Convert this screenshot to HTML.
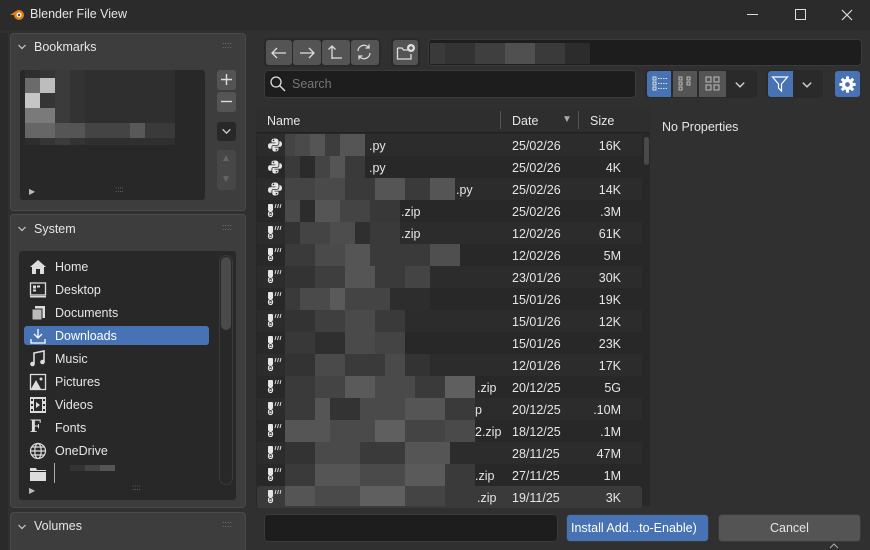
<!DOCTYPE html>
<html><head><meta charset="utf-8">
<style>
*{box-sizing:border-box;margin:0;padding:0}
html,body{width:870px;height:550px;overflow:hidden}
body{background:#303030;font-family:"Liberation Sans",sans-serif;color:#e6e6e6;font-size:12.5px;position:relative}
.a{position:absolute}
.title{left:0;top:0;width:870px;height:30px;background:#2b2b2b}
.panel{background:#3d3d3d;border:1px solid #4a4a4a;border-radius:4px}
.box{background:#282828;border-radius:3px}
.btn{background:#545454;border-radius:3px}
.t{position:absolute;white-space:nowrap}
.row{position:absolute;left:257px;width:385px;height:22px}
.row .d{position:absolute;left:255px;top:5px}
.row .s{position:absolute;right:21px;top:5px}
.row .n{position:absolute;top:5px}
.mo{position:absolute;left:28px;top:0;height:22px}
.ic{position:absolute;left:10px;top:3px}
.chev{position:absolute}
</style></head><body>
<svg width="0" height="0" style="position:absolute"><defs>
<symbol id="py" viewBox="0 0 16 16"><path d="M8 1.5 C4.5 1.5 4.5 3 4.5 4 V5.5 H8.5 V6.3 H3 C1.5 6.3 1 7.8 1 9 C1 10.5 1.7 11.8 3 11.8 H4.5 V10 C4.5 8.8 5.5 8 6.5 8 H10 C11 8 11.5 7.3 11.5 6.5 V4 C11.5 2.5 10 1.5 8 1.5Z" fill="#e6e6e6"/><path d="M8 14.5 C11.5 14.5 11.5 13 11.5 12 V10.5 H7.5 V9.7 H13 C14.5 9.7 15 8.2 15 7 C15 5.5 14.3 4.2 13 4.2 H12.3 V6.5 C12.3 7.8 11.3 8.8 10 8.8 H6.5 C5.8 8.8 5.3 9.3 5.3 10 V12 C5.3 13.5 6 14.5 8 14.5Z" fill="#e6e6e6"/><circle cx="6.5" cy="3.3" r=".8" fill="#282828"/><circle cx="9.5" cy="12.7" r=".8" fill="#282828"/></symbol>
<symbol id="zip" viewBox="0 0 16 16"><rect x="1" y="1" width="5" height="7" rx="1" fill="#e6e6e6"/><rect x="1.5" y="8.5" width="4" height="5" rx="2" fill="none" stroke="#e6e6e6" stroke-width="1.2"/><rect x="2.5" y="10.5" width="2" height="1.5" fill="#e6e6e6"/><path d="M8 5 L9 1 M10.5 5 L11.5 1 M13 5 L14 1" stroke="#e6e6e6" stroke-width="0.9"/></symbol>
<symbol id="cv" viewBox="0 0 10 10"><path d="M1.5 3 L5 6.5 L8.5 3" fill="none" stroke="#ccc" stroke-width="1.2"/></symbol>
</defs></svg>
<div class="a title"></div>
<svg class="a" style="left:9px;top:6px" width="16" height="16" viewBox="0 0 16 16"><circle cx="10" cy="9" r="5" fill="#e87d0d"/><circle cx="10" cy="9" r="2.5" fill="#fff"/><circle cx="10" cy="9" r="1.3" fill="#265787"/><path d="M1 9 L7 5 L5 9Z" fill="#e87d0d"/></svg>
<div class="t" style="left:30px;top:7px;font-size:12.5px">Blender File View</div>
<div class="a" style="left:747px;top:14px;width:11px;height:1px;background:#ddd"></div>
<div class="a" style="left:795px;top:9px;width:11px;height:11px;border:1.3px solid #ddd"></div>
<svg class="a" style="left:841px;top:9px" width="12" height="12" viewBox="0 0 12 12"><path d="M1 1 L11 11 M11 1 L1 11" stroke="#ddd" stroke-width="1.2"/></svg>

<div class="a" style="left:0;top:33px;width:8px;height:517px;background:#2a2a2a"></div>

<!-- Bookmarks -->
<div class="a panel" style="left:10px;top:33px;width:236px;height:178px"></div>
<svg class="a" style="left:17px;top:42px" width="10" height="10"><use href="#cv"/></svg>
<div class="t" style="left:34px;top:40px">Bookmarks</div>
<div class="t" style="left:222px;top:40px;color:#777;font-size:9px">::::</div>
<div class="a box" style="left:20px;top:70px;width:185px;height:130px"></div>
<div class="a" style="left:25px;top:70px;width:150px;height:75px;background:linear-gradient(90deg,#2e2e2e 0 15px,#353535 15px 30px,#3b3b3b 30px 45px,#333 45px 60px,#2f2f2f 60px 100%)"></div>
<div class="a" style="left:25px;top:78px;width:15px;height:15px;background:#6b6b6b"></div>
<div class="a" style="left:40px;top:78px;width:15px;height:15px;background:#bdbdbd"></div>
<div class="a" style="left:25px;top:93px;width:15px;height:15px;background:#c6c6c6"></div>
<div class="a" style="left:25px;top:108px;width:30px;height:15px;background:#7a7a7a"></div>
<div class="a" style="left:25px;top:123px;width:150px;height:15px;background:linear-gradient(90deg,#666 0 30px,#555 30px 60px,#444 60px 105px,#585858 105px 120px,#3a3a3a 120px)"></div>
<div class="t" style="left:29px;top:187px;color:#bbb;font-size:8px">▶</div>
<div class="t" style="left:115px;top:185px;color:#777;font-size:8px">::::</div>
<div class="a btn" style="left:217px;top:70px;width:19px;height:20px"></div>
<svg class="a" style="left:220px;top:73px" width="13" height="13"><path d="M6.5 1 V12 M1 6.5 H12" stroke="#ddd" stroke-width="1.4"/></svg>
<div class="a btn" style="left:217px;top:92px;width:19px;height:20px"></div>
<svg class="a" style="left:220px;top:95px" width="13" height="13"><path d="M1 6.5 H12" stroke="#ddd" stroke-width="1.4"/></svg>
<div class="a" style="left:217px;top:122px;width:19px;height:19px;background:#282828;border-radius:3px"></div>
<svg class="a" style="left:221px;top:126px" width="11" height="11"><use href="#cv"/></svg>
<div class="a" style="left:217px;top:150px;width:19px;height:40px;background:#474747;border-radius:3px"></div>
<div class="t" style="left:221px;top:153px;color:#666;font-size:10px">▲</div><div class="t" style="left:221px;top:174px;color:#666;font-size:10px">▼</div>

<!-- System -->
<div class="a panel" style="left:10px;top:214px;width:236px;height:294px"></div>
<svg class="a" style="left:17px;top:224px" width="10" height="10"><use href="#cv"/></svg>
<div class="t" style="left:34px;top:222px">System</div>
<div class="t" style="left:222px;top:222px;color:#777;font-size:9px">::::</div>
<div class="a box" style="left:19px;top:251px;width:217px;height:249px"></div>
<div class="a" style="left:219px;top:255px;width:14px;height:230px;border:1px solid #3a3a3a;border-radius:7px"></div>
<div class="a" style="left:221px;top:257px;width:10px;height:73px;background:#4a4a4a;border-radius:5px"></div>
<div class="a" style="left:24px;top:326px;width:185px;height:19px;background:#4772b3;border-radius:3px"></div>
<svg class="a" style="left:29px;top:258px" width="18" height="18" viewBox="0 0 18 18"><path d="M9 2 L17 9 L15 9 L15 16 L11 16 L11 11 L7 11 L7 16 L3 16 L3 9 L1 9Z" fill="#ddd"/></svg>
<svg class="a" style="left:29px;top:281px" width="18" height="18" viewBox="0 0 18 18"><rect x="1.5" y="2" width="15" height="12" fill="none" stroke="#ddd" stroke-width="1.3"/><rect x="4" y="4.5" width="3" height="3" fill="#ddd"/><rect x="8" y="4.5" width="3" height="2" fill="#ddd"/><rect x="4" y="8.5" width="3" height="2" fill="#ddd"/><rect x="1" y="15" width="16" height="1.5" fill="#ddd"/></svg>
<svg class="a" style="left:29px;top:304px" width="18" height="18" viewBox="0 0 18 18"><rect x="6" y="2" width="10" height="12" fill="#ddd"/><rect x="3" y="5" width="10" height="11" fill="#bbb" stroke="#282828"/></svg>
<svg class="a" style="left:29px;top:327px" width="18" height="18" viewBox="0 0 18 18"><path d="M9 2 V11 M5 7 L9 11 L13 7 M2 12 V16 H16 V12" fill="none" stroke="#fff" stroke-width="1.3"/></svg>
<svg class="a" style="left:29px;top:350px" width="18" height="18" viewBox="0 0 18 18"><path d="M5 14 V3 L15 1 V12" fill="none" stroke="#ddd" stroke-width="1.6"/><circle cx="3.5" cy="14" r="2.3" fill="#ddd"/><circle cx="13.5" cy="12" r="2.3" fill="#ddd"/></svg>
<svg class="a" style="left:29px;top:373px" width="18" height="18" viewBox="0 0 18 18"><rect x="1.5" y="1.5" width="15" height="15" fill="none" stroke="#ddd" stroke-width="1.3"/><path d="M2 16 L7 7 L12 16Z" fill="#ddd"/><circle cx="12" cy="6" r="1.5" fill="#ddd"/></svg>
<svg class="a" style="left:29px;top:396px" width="18" height="18" viewBox="0 0 18 18"><rect x="1" y="1" width="16" height="16" fill="#ddd"/><rect x="5" y="3" width="8" height="12" fill="#282828"/><path d="M7 6 L11 9 L7 12Z" fill="#ddd"/><rect x="2" y="3" width="2" height="2" fill="#282828"/><rect x="2" y="8" width="2" height="2" fill="#282828"/><rect x="2" y="13" width="2" height="2" fill="#282828"/><rect x="14" y="3" width="2" height="2" fill="#282828"/><rect x="14" y="8" width="2" height="2" fill="#282828"/><rect x="14" y="13" width="2" height="2" fill="#282828"/></svg>
<div class="t" style="left:30px;top:416px;font-family:'Liberation Serif',serif;font-weight:bold;font-size:19px;color:#ddd">F</div>
<svg class="a" style="left:29px;top:442px" width="18" height="18" viewBox="0 0 18 18"><g fill="none" stroke="#ddd" stroke-width="1.2"><circle cx="9" cy="9" r="7.5"/><ellipse cx="9" cy="9" rx="3.2" ry="7.5"/><path d="M1.5 9H16.5M3 5H15M3 13H15"/></g></svg>
<svg class="a" style="left:29px;top:465px" width="18" height="18" viewBox="0 0 18 18"><path d="M1 3 H7 L8 5 H17 V16 H1Z" fill="#ddd"/><rect x="1" y="6" width="16" height="1" fill="#282828"/></svg>
<div class="t" style="left:55px;top:260px">Home</div>
<div class="t" style="left:55px;top:283px">Desktop</div>
<div class="t" style="left:55px;top:306px">Documents</div>
<div class="t" style="left:55px;top:329px;color:#fff">Downloads</div>
<div class="t" style="left:55px;top:352px">Music</div>
<div class="t" style="left:55px;top:375px">Pictures</div>
<div class="t" style="left:55px;top:398px">Videos</div>
<div class="t" style="left:55px;top:421px">Fonts</div>
<div class="t" style="left:55px;top:444px">OneDrive</div>
<div class="a" style="left:54px;top:463px;width:1px;height:20px;background:#aaa"></div>
<div class="a" style="left:70px;top:465px;width:45px;height:6px;background:linear-gradient(90deg,#333 0 15px,#444 15px 30px,#555 30px)"></div>
<div class="t" style="left:29px;top:486px;color:#bbb;font-size:8px">▶</div>
<div class="t" style="left:132px;top:483px;color:#777;font-size:8px">::::</div>

<!-- Volumes -->
<div class="a panel" style="left:10px;top:512px;width:236px;height:50px"></div>
<svg class="a" style="left:17px;top:522px" width="10" height="10"><use href="#cv"/></svg>
<div class="t" style="left:34px;top:519px">Volumes</div>
<div class="t" style="left:222px;top:519px;color:#777;font-size:9px">::::</div>

<!-- toolbar -->
<div class="a" style="left:264px;top:38px;width:117px;height:29px;background:#2a2a2a;border-radius:4px"></div>
<div class="a btn" style="left:266px;top:40px;width:26px;height:25px"></div>
<div class="a btn" style="left:293px;top:40px;width:28px;height:25px"></div>
<div class="a btn" style="left:322px;top:40px;width:28px;height:25px"></div>
<div class="a btn" style="left:351px;top:40px;width:28px;height:25px"></div>
<svg class="a" style="left:270px;top:44px" width="18" height="18" viewBox="0 0 18 18"><path d="M16 9 H2 M7 4 L2 9 L7 14" fill="none" stroke="#ddd" stroke-width="1.3"/></svg>
<svg class="a" style="left:298px;top:44px" width="18" height="18" viewBox="0 0 18 18"><path d="M2 9 H16 M11 4 L16 9 L11 14" fill="none" stroke="#ddd" stroke-width="1.3"/></svg>
<svg class="a" style="left:327px;top:43px" width="18" height="18" viewBox="0 0 18 18"><path d="M5 16 V3 M1.5 6.5 L5 3 L8.5 6.5 M5 15 H15" fill="none" stroke="#ddd" stroke-width="1.3"/></svg>
<svg class="a" style="left:355px;top:43px" width="18" height="18" viewBox="0 0 18 18"><path d="M3 8 A6 6 0 0 1 14 5 M15 10 A6 6 0 0 1 4 13 M14 1.5 V5 H10.5 M4 16.5 V13 H7.5" fill="none" stroke="#ddd" stroke-width="1.3"/></svg>
<div class="a" style="left:391px;top:38px;width:29px;height:29px;background:#2a2a2a;border-radius:4px"></div>
<div class="a btn" style="left:393px;top:40px;width:25px;height:25px"></div>
<svg class="a" style="left:396px;top:43px" width="20" height="18" viewBox="0 0 20 18"><path d="M1.5 5 H6 L7.5 7 H12 M1.5 5 V16 H15 V11" fill="none" stroke="#ddd" stroke-width="1.3"/><circle cx="15" cy="5" r="4" fill="#ddd"/><path d="M15 3 V7 M13 5 H17" stroke="#545454" stroke-width="1.3"/></svg>
<div class="a" style="left:428px;top:39px;width:434px;height:27px;background:#1d1d1d;border-radius:4px;border:1px solid #3a3a3a"></div>
<div class="a" style="left:430px;top:43px;width:160px;height:21px;background:linear-gradient(90deg,#3a3a3a 0 15px,#333 15px 45px,#3f3f3f 45px 75px,#505050 75px 105px,#3a3a3a 105px 135px,#2c2c2c 135px)"></div>

<div class="a" style="left:264px;top:70px;width:372px;height:28px;background:#1d1d1d;border-radius:4px;border:1px solid #3a3a3a"></div>
<svg class="a" style="left:269px;top:75px" width="18" height="18" viewBox="0 0 18 18"><circle cx="7" cy="7" r="5" fill="none" stroke="#ddd" stroke-width="1.3"/><path d="M10.5 10.5 L16 16" stroke="#ddd" stroke-width="1.4"/></svg>
<div class="t" style="left:292px;top:77px;color:#777">Search</div>

<div class="a" style="left:645px;top:70px;width:112px;height:28px;background:#2a2a2a;border-radius:4px"></div>
<div class="a" style="left:647px;top:71px;width:24px;height:26px;background:#4772b3;border-radius:3px 0 0 3px"></div>
<div class="a" style="left:673px;top:71px;width:24px;height:26px;background:#545454"></div>
<div class="a" style="left:699px;top:71px;width:27px;height:26px;background:#545454"></div>
<svg class="a" style="left:651px;top:75px" width="18" height="18" viewBox="0 0 18 18"><g fill="none" stroke="#ddd"><rect x="2" y="2" width="3" height="3"/><rect x="2" y="7" width="3" height="3"/><rect x="2" y="12" width="3" height="3"/></g><path d="M7 3.5H16M7 8.5H16M7 13.5H16" stroke="#ddd" stroke-dasharray="1.5 1"/></svg>
<svg class="a" style="left:677px;top:75px" width="18" height="18" viewBox="0 0 18 18"><g fill="none" stroke="#bbb"><rect x="2" y="2" width="3" height="3"/><rect x="2" y="7" width="3" height="3"/><rect x="2" y="12" width="3" height="3"/><rect x="10" y="2" width="3" height="3"/><rect x="10" y="7" width="3" height="3"/></g></svg>
<svg class="a" style="left:704px;top:75px" width="18" height="18" viewBox="0 0 18 18"><g fill="none" stroke="#bbb"><rect x="2" y="2" width="5" height="5"/><rect x="10" y="2" width="5" height="5"/><rect x="2" y="10" width="5" height="5"/><rect x="10" y="10" width="5" height="5"/></g></svg>
<svg class="a" style="left:734px;top:79px" width="12" height="12"><use href="#cv"/></svg>

<div class="a" style="left:766px;top:70px;width:57px;height:28px;background:#2a2a2a;border-radius:4px"></div>
<div class="a" style="left:768px;top:71px;width:25px;height:26px;background:#4772b3;border-radius:3px 0 0 3px"></div>
<svg class="a" style="left:771px;top:75px" width="18" height="18" viewBox="0 0 18 18"><path d="M1.5 2 H16.5 L10.5 9 V16 L7.5 13 V9Z" fill="none" stroke="#fff" stroke-width="1.2"/></svg>
<svg class="a" style="left:801px;top:79px" width="12" height="12"><use href="#cv"/></svg>
<div class="a" style="left:835px;top:71px;width:25px;height:26px;background:#4772b3;border-radius:3px"></div>
<svg class="a" style="left:838px;top:75px" width="19" height="19" viewBox="0 0 20 20"><g fill="#fff"><circle cx="10" cy="10" r="6"/><g stroke="#fff" stroke-width="3.2"><path d="M10 1.5 V18.5 M1.5 10 H18.5 M4 4 L16 16 M16 4 L4 16"/></g></g><circle cx="10" cy="10" r="2.5" fill="#4772b3"/></svg>

<!-- file list -->
<div class="a" style="left:256px;top:108px;width:394px;height:398px;background:#282828"></div>
<div class="a" style="left:256px;top:108px;width:394px;height:25px;background:#2e2e2e;border-bottom:1px solid #222"></div>
<div class="t" style="left:267px;top:114px">Name</div>
<div class="a" style="left:500px;top:111px;width:1px;height:18px;background:#555"></div>
<div class="t" style="left:512px;top:114px">Date</div>
<div class="t" style="left:562px;top:114px;font-size:10px;color:#aaa">▼</div>
<div class="a" style="left:578px;top:111px;width:1px;height:18px;background:#555"></div>
<div class="t" style="left:590px;top:114px">Size</div>
<div class="a" style="left:644px;top:137px;width:5px;height:28px;background:#4a4a4a;border-radius:3px"></div>

<div class="row" style="top:134px;background:#2c2c2c"><svg class="ic" width="16" height="16"><use href="#py"/></svg><div class="mo" style="width:80px;background:linear-gradient(90deg,#444 0 10px,#4a4a4a 10px 25px,#555 25px 40px,#3d3d3d 40px 55px,#555 55px)"></div><span class="n" style="left:112px">.py</span><span class="d">25/02/26</span><span class="s">16K</span></div>
<div class="row" style="top:156px"><svg class="ic" width="16" height="16"><use href="#py"/></svg><div class="mo" style="width:80px;background:linear-gradient(90deg,#3a3a3a 0 15px,#2b2b2b 15px 30px,#444 30px 45px,#555 45px 60px,#3a3a3a 60px)"></div><span class="n" style="left:112px">.py</span><span class="d">25/02/26</span><span class="s">4K</span></div>
<div class="row" style="top:178px;background:#2c2c2c"><svg class="ic" width="16" height="16"><use href="#py"/></svg><div class="mo" style="width:170px;background:linear-gradient(90deg,#444 0 30px,#4a4a4a 30px 60px,#3a3a3a 60px 90px,#555 90px 120px,#3a3a3a 120px 145px,#555 145px)"></div><span class="n" style="left:199px">.py</span><span class="d">25/02/26</span><span class="s">14K</span></div>
<div class="row" style="top:200px"><svg class="ic" width="16" height="16"><use href="#zip"/></svg><div class="mo" style="width:115px;background:linear-gradient(90deg,#4a4a4a 0 15px,#2c2c2c 15px 30px,#555 30px 55px,#444 55px 85px,#383838 85px)"></div><span class="n" style="left:144px">.zip</span><span class="d">25/02/26</span><span class="s">.3M</span></div>
<div class="row" style="top:222px;background:#2c2c2c"><svg class="ic" width="16" height="16"><use href="#zip"/></svg><div class="mo" style="width:115px;background:linear-gradient(90deg,#333 0 15px,#444 15px 45px,#4d4d4d 45px 70px,#2f2f2f 70px 85px,#3a3a3a 85px)"></div><span class="n" style="left:144px">.zip</span><span class="d">12/02/26</span><span class="s">61K</span></div>
<div class="row" style="top:244px"><svg class="ic" width="16" height="16"><use href="#zip"/></svg><div class="mo" style="width:175px;background:linear-gradient(90deg,#3a3a3a 0 30px,#4a4a4a 30px 60px,#555 60px 85px,#3a3a3a 85px 145px,#4f4f4f 145px)"></div><span class="d">12/02/26</span><span class="s">5M</span></div>
<div class="row" style="top:266px;background:#2c2c2c"><svg class="ic" width="16" height="16"><use href="#zip"/></svg><div class="mo" style="width:145px;background:linear-gradient(90deg,#333 0 30px,#3e3e3e 30px 60px,#555 60px 90px,#3a3a3a 90px 120px,#444 120px)"></div><span class="d">23/01/26</span><span class="s">30K</span></div>
<div class="row" style="top:288px"><svg class="ic" width="16" height="16"><use href="#zip"/></svg><div class="mo" style="width:145px;background:linear-gradient(90deg,#3a3a3a 0 15px,#4a4a4a 15px 45px,#5a5a5a 45px 60px,#444 60px 105px,#2d2d2d 105px)"></div><span class="d">15/01/26</span><span class="s">19K</span></div>
<div class="row" style="top:310px;background:#2c2c2c"><svg class="ic" width="16" height="16"><use href="#zip"/></svg><div class="mo" style="width:120px;background:linear-gradient(90deg,#333 0 30px,#3f3f3f 30px 60px,#4a4a4a 60px 90px,#3a3a3a 90px)"></div><span class="d">15/01/26</span><span class="s">12K</span></div>
<div class="row" style="top:332px"><svg class="ic" width="16" height="16"><use href="#zip"/></svg><div class="mo" style="width:120px;background:linear-gradient(90deg,#383838 0 30px,#2f2f2f 30px 60px,#4a4a4a 60px 90px,#444 90px)"></div><span class="d">15/01/26</span><span class="s">23K</span></div>
<div class="row" style="top:354px;background:#2c2c2c"><svg class="ic" width="16" height="16"><use href="#zip"/></svg><div class="mo" style="width:145px;background:linear-gradient(90deg,#333 0 30px,#4a4a4a 30px 60px,#3a3a3a 60px 100px,#4a4a4a 100px 120px,#333 120px)"></div><span class="d">12/01/26</span><span class="s">17K</span></div>
<div class="row" style="top:376px"><svg class="ic" width="16" height="16"><use href="#zip"/></svg><div class="mo" style="width:190px;background:linear-gradient(90deg,#3a3a3a 0 30px,#444 30px 60px,#5a5a5a 60px 90px,#4a4a4a 90px 130px,#3a3a3a 130px 160px,#5f5f5f 160px)"></div><span class="n" style="left:220px">.zip</span><span class="d">20/12/25</span><span class="s">5G</span></div>
<div class="row" style="top:398px;background:#2c2c2c"><svg class="ic" width="16" height="16"><use href="#zip"/></svg><div class="mo" style="width:190px;background:linear-gradient(90deg,#3a3a3a 0 30px,#555 30px 45px,#333 45px 75px,#4a4a4a 75px 120px,#555 120px 160px,#3a3a3a 160px)"></div><span class="n" style="left:218px">p</span><span class="d">20/12/25</span><span class="s">.10M</span></div>
<div class="row" style="top:420px"><svg class="ic" width="16" height="16"><use href="#zip"/></svg><div class="mo" style="width:190px;background:linear-gradient(90deg,#555 0 45px,#4a4a4a 45px 90px,#5f5f5f 90px 120px,#444 120px 160px,#4a4a4a 160px)"></div><span class="n" style="left:218px">2.zip</span><span class="d">18/12/25</span><span class="s">.1M</span></div>
<div class="row" style="top:442px;background:#2c2c2c"><svg class="ic" width="16" height="16"><use href="#zip"/></svg><div class="mo" style="width:165px;background:linear-gradient(90deg,#333 0 30px,#4a4a4a 30px 75px,#3a3a3a 75px 120px,#555 120px)"></div><span class="d">28/11/25</span><span class="s">47M</span></div>
<div class="row" style="top:464px"><svg class="ic" width="16" height="16"><use href="#zip"/></svg><div class="mo" style="width:190px;background:linear-gradient(90deg,#3a3a3a 0 30px,#555 30px 75px,#4a4a4a 75px 120px,#5a5a5a 120px 160px,#3a3a3a 160px)"></div><span class="n" style="left:218px">.zip</span><span class="d">27/11/25</span><span class="s">1M</span></div>
<div class="row" style="top:486px;background:#3a3a3a;border-radius:3px"><svg class="ic" width="16" height="16"><use href="#zip"/></svg><div class="mo" style="width:190px;height:20px;background:linear-gradient(90deg,#555 0 30px,#4a4a4a 30px 75px,#5f5f5f 75px 120px,#444 120px 160px,#3a3a3a 160px)"></div><span class="n" style="left:220px">.zip</span><span class="d">19/11/25</span><span class="s">3K</span></div>

<div class="t" style="left:662px;top:120px">No Properties</div>

<!-- bottom -->
<div class="a" style="left:264px;top:514px;width:294px;height:28px;background:#1d1d1d;border:1px solid #3a3a3a;border-radius:4px"></div>
<div class="a" style="left:566px;top:514px;width:143px;height:28px;background:#4772b3;border:1px solid #3a3a3a;border-radius:4px"></div>
<div class="t" style="left:571px;top:521px;color:#fff">Install Add...to-Enable)</div>
<div class="a" style="left:718px;top:514px;width:143px;height:28px;background:#545454;border:1px solid #3a3a3a;border-radius:4px"></div>
<div class="t" style="left:770px;top:521px">Cancel</div>
<svg class="a" style="left:829px;top:543px" width="10" height="6"><path d="M1 5 L5 1 L9 5" fill="none" stroke="#aaa"/></svg>
</body></html>
